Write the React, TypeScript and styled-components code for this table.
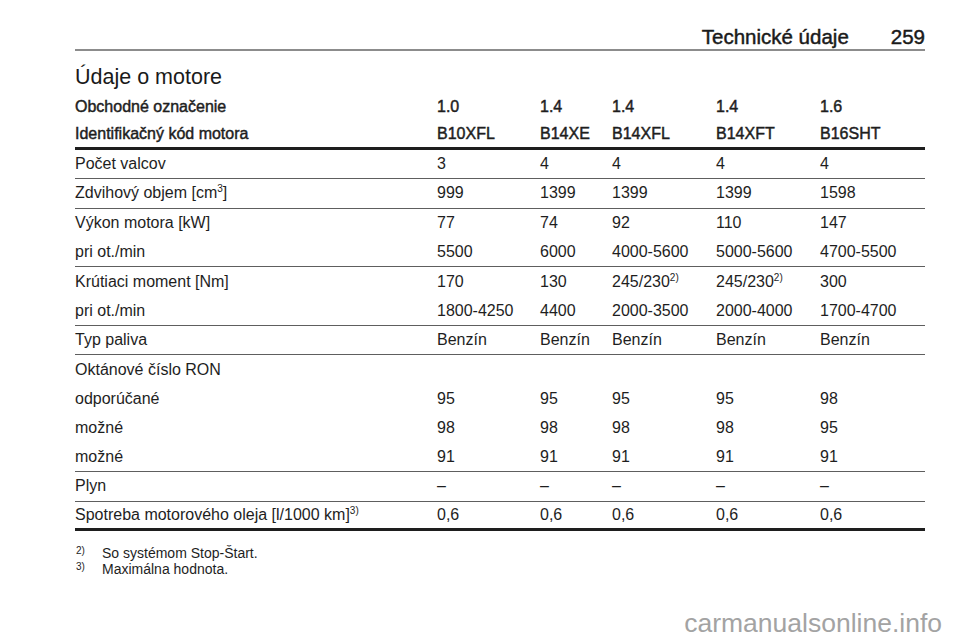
import styled, { createGlobalStyle } from 'styled-components';

type Divider = 'none' | 'thin' | 'thick';

type RowData = {
  label: React.ReactNode;
  values: React.ReactNode[];
  divider: Divider;
};

const GlobalStyles = createGlobalStyle`
  html, body {
    margin: 0;
    padding: 0;
    background: #ffffff;
  }
  body {
    font-family: "Liberation Sans", Arial, sans-serif;
    color: #1e1e1e;
  }
`;

const Page = styled.div`
  position: relative;
  width: 960px;
  height: 642px;
  overflow: hidden;
  padding: 0 35px 0 75px;
  box-sizing: border-box;
`;

// running page header with the chapter name and page number
const RunningHeader = styled.header`
  display: flex;
  justify-content: flex-end;
  align-items: flex-end;
  gap: 42px;
  height: 51px;
  padding-bottom: 2px;
  box-sizing: border-box;
  border-bottom: 2px solid #8c8c8c;
  font-size: 20.5px;
  line-height: 21px;
  color: #1a1a1a;
  -webkit-text-stroke: 0.45px #1a1a1a;
`;

const Title = styled.h1`
  margin: 0;
  height: 42px;
  padding-top: 15px;
  box-sizing: border-box;
  font-weight: 400;
  font-size: 21.5px;
  line-height: 22px;
  color: #1a1a1a;
`;

const Row = styled.div<{ $divider: Divider; $head?: boolean }>`
  display: grid;
  grid-template-columns: 362px 103px 72px 104px 104px 1fr;
  align-items: center;
  height: ${({ $head, $divider }) => ($head ? ($divider === 'thick' ? '30px' : '27px') : '29.3px')};
  box-sizing: border-box;
  border-bottom: ${({ $divider }) =>
    $divider === 'thick' ? '3px solid #1e1e1e' : $divider === 'thin' ? '1px solid #5e5e5e' : 'none'};
  font-size: 16px;
  -webkit-text-stroke: ${({ $head }) => ($head ? '0.45px #1e1e1e' : '0')};
  white-space: nowrap;
`;

const Cell = styled.span`
  line-height: 1;
`;

const Sup = styled.sup`
  font-size: 10px;
  vertical-align: 6px;
  line-height: 0;
`;

const Notes = styled.div`
  margin-top: 14px;
  font-size: 14px;
  line-height: 16px;
  color: #1e1e1e;
`;

const Note = styled.div`
  display: flex;
`;

const NoteMark = styled.span`
  width: 26px;
  font-size: 10px;
  line-height: 12px;
  padding-left: 1px;
`;

const Watermark = styled.div`
  position: absolute;
  right: 18px;
  bottom: 3px;
  font-size: 26.5px;
  color: #a3a3a3;
`;

const dash = '–';

const rows: RowData[] = [
  { label: 'Počet valcov', values: ['3', '4', '4', '4', '4'], divider: 'thin' },
  {
    label: (
      <>
        Zdvihový objem [cm<Sup>3</Sup>]
      </>
    ),
    values: ['999', '1399', '1399', '1399', '1598'],
    divider: 'thin'
  },
  { label: 'Výkon motora [kW]', values: ['77', '74', '92', '110', '147'], divider: 'none' },
  {
    label: 'pri ot./min',
    values: ['5500', '6000', '4000-5600', '5000-5600', '4700-5500'],
    divider: 'thin'
  },
  {
    label: 'Krútiaci moment [Nm]',
    values: [
      '170',
      '130',
      <>
        245/230<Sup>2)</Sup>
      </>,
      <>
        245/230<Sup>2)</Sup>
      </>,
      '300'
    ],
    divider: 'none'
  },
  {
    label: 'pri ot./min',
    values: ['1800-4250', '4400', '2000-3500', '2000-4000', '1700-4700'],
    divider: 'thin'
  },
  {
    label: 'Typ paliva',
    values: ['Benzín', 'Benzín', 'Benzín', 'Benzín', 'Benzín'],
    divider: 'thin'
  },
  { label: 'Oktánové číslo RON', values: ['', '', '', '', ''], divider: 'none' },
  { label: 'odporúčané', values: ['95', '95', '95', '95', '98'], divider: 'none' },
  { label: 'možné', values: ['98', '98', '98', '98', '95'], divider: 'none' },
  { label: 'možné', values: ['91', '91', '91', '91', '91'], divider: 'thin' },
  { label: 'Plyn', values: [dash, dash, dash, dash, dash], divider: 'thin' },
  {
    label: (
      <>
        Spotreba motorového oleja [l/1000 km]<Sup>3)</Sup>
      </>
    ),
    values: ['0,6', '0,6', '0,6', '0,6', '0,6'],
    divider: 'thick'
  }
];

export default function App() {
  return (
    <Page>
      <GlobalStyles />
      <RunningHeader>
        <span>Technické údaje</span>
        <span>259</span>
      </RunningHeader>
      <Title>Údaje o motore</Title>
      <Row $head $divider="none">
        <Cell>Obchodné označenie</Cell>
        <Cell>1.0</Cell>
        <Cell>1.4</Cell>
        <Cell>1.4</Cell>
        <Cell>1.4</Cell>
        <Cell>1.6</Cell>
      </Row>
      <Row $head $divider="thick">
        <Cell>Identifikačný kód motora</Cell>
        <Cell>B10XFL</Cell>
        <Cell>B14XE</Cell>
        <Cell>B14XFL</Cell>
        <Cell>B14XFT</Cell>
        <Cell>B16SHT</Cell>
      </Row>
      {rows.map((row, i) => (
        <Row key={i} $divider={row.divider}>
          <Cell>{row.label}</Cell>
          {row.values.map((v, j) => (
            <Cell key={j}>{v}</Cell>
          ))}
        </Row>
      ))}
      <Notes>
        <Note>
          <NoteMark>2)</NoteMark>
          <span>So systémom Stop-Štart.</span>
        </Note>
        <Note>
          <NoteMark>3)</NoteMark>
          <span>Maximálna hodnota.</span>
        </Note>
      </Notes>
      <Watermark>carmanualsonline.info</Watermark>
    </Page>
  );
}
